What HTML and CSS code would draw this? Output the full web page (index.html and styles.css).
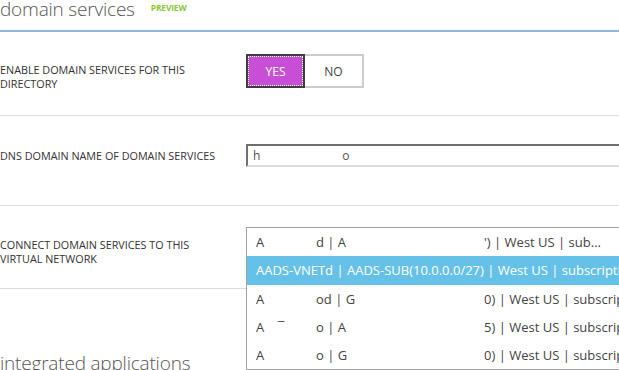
FILE: index.html
```html
<!DOCTYPE html>
<html lang="en">
<head>
    <meta charset="UTF-8">
    <title>domain services</title>
    <link rel="stylesheet" href="styles.css">
</head>
<body>
    <div class="page">
        <div class="section-head">
            <h1>domain services</h1>
            <span class="badge">PREVIEW</span>
        </div>

        <div class="row row-toggle">
            <div class="label">ENABLE DOMAIN SERVICES FOR THIS DIRECTORY</div>
            <div class="toggle">
                <button class="on">YES</button>
                <button>NO</button>
            </div>
        </div>

        <div class="row row-dns">
            <div class="label">DNS DOMAIN NAME OF DOMAIN SERVICES</div>
            <div class="textbox"><span>h</span><span class="gap">o</span></div>
        </div>

        <div class="row row-vnet">
            <div class="label">CONNECT DOMAIN SERVICES TO THIS VIRTUAL NETWORK</div>
            <div class="select">
                <ul class="options">
                    <li class="opt"><span>A</span><span>d | A</span><span>') | West US | sub...</span></li>
                    <li class="opt selected"><span class="full">AADS-VNETd | AADS-SUB(10.0.0.0/27) | West US | subscription</span></li>
                    <li class="opt"><span>A</span><span>od | G</span><span>0) | West US | subscription</span></li>
                    <li class="opt"><span>A&nbsp;&nbsp;&nbsp;&nbsp;‾</span><span>o | A</span><span>5) | West US | subscription</span></li>
                    <li class="opt"><span>A</span><span>o | G</span><span>0) | West US | subscription</span></li>
                </ul>
            </div>
        </div>

        <h2 class="section-title">integrated applications</h2>
    </div>
</body>
</html>
```

FILE: styles.css
```css
html, body {
    margin: 0;
    overflow: hidden;
}
body {
    font-family: 'Open Sans', 'Noto Sans', sans-serif;
    color: #333;
    background: white;
    width: 619px;
    height: 370px;
}
.page {
    width: 619px;
}
.section-head {
    display: flex;
    align-items: flex-start;
    height: 30px;
    border-bottom: 2px solid #8cb5e0;
}
h1, .section-title {
    margin: 0;
    font-weight: 300;
    font-size: 19px;
    color: #555;
    letter-spacing: -0.2px;
}
h1 {
    line-height: 20px;
    margin-top: -1px;
}
.badge {
    margin-left: 16px;
    margin-top: 2px;
    font-size: 8.5px;
    font-weight: 700;
    color: #8cc63f;
    letter-spacing: -0.2px;
}
.row {
    display: flex;
    align-items: flex-start;
    border-bottom: 1px solid #dcdcdc;
    box-sizing: border-box;
}
.label {
    width: 246px;
    flex-shrink: 0;
    padding-right: 26px;
    box-sizing: border-box;
    font-size: 10.8px;
    line-height: 14px;
    color: #333;
}
.row-toggle {
    padding-top: 22px;
    height: 84px;
}
.row-toggle .label {
    padding-top: 9px;
}
.toggle {
    display: flex;
    height: 34px;
}
.toggle button {
    width: 59px;
    height: 34px;
    border: 2px solid #cccccc;
    border-left: none;
    background: white;
    font-family: inherit;
    font-size: 12px;
    color: #444;
    padding: 0;
}
.toggle button.on {
    border: 2px solid #3e3e3e;
    background: #c74fd6;
    color: white;
    outline: 1px dotted white;
    outline-offset: -3px;
}
.row-dns {
    height: 90px;
    padding-top: 28px;
}
.row-dns .label {
    padding-top: 5px;
}
.textbox {
    width: 420px;
    height: 23px;
    flex-shrink: 0;
    border-top: 2px solid #707070;
    border-left: 2px solid #707070;
    border-bottom: 2px solid #dddddd;
    box-sizing: border-box;
    font-size: 12px;
    line-height: 19px;
    padding-left: 5px;
    color: #555;
}
.textbox .gap {
    margin-left: 82px;
}
.row-vnet {
    height: 83px;
    padding-top: 32px;
    margin-bottom: 63px;
}
.select {
    position: relative;
    width: 420px;
    flex-shrink: 0;
}
.options {
    position: absolute;
    top: -11px;
    left: 0;
    width: 420px;
    margin: 0;
    padding: 0;
    list-style: none;
    background: white;
    border: 1px solid #a3a3a3;
    z-index: 2;
}
.opt {
    display: grid;
    grid-template-columns: 60px 168px auto;
    height: 28px;
    line-height: 28px;
    padding-left: 9px;
    font-size: 13px;
    color: #444;
    white-space: nowrap;
    overflow: hidden;
}
.opt.selected {
    display: block;
    height: 29px;
    line-height: 29px;
    background: #66c1e8;
    color: white;
}
.section-title {
    line-height: 22px;
}
```
